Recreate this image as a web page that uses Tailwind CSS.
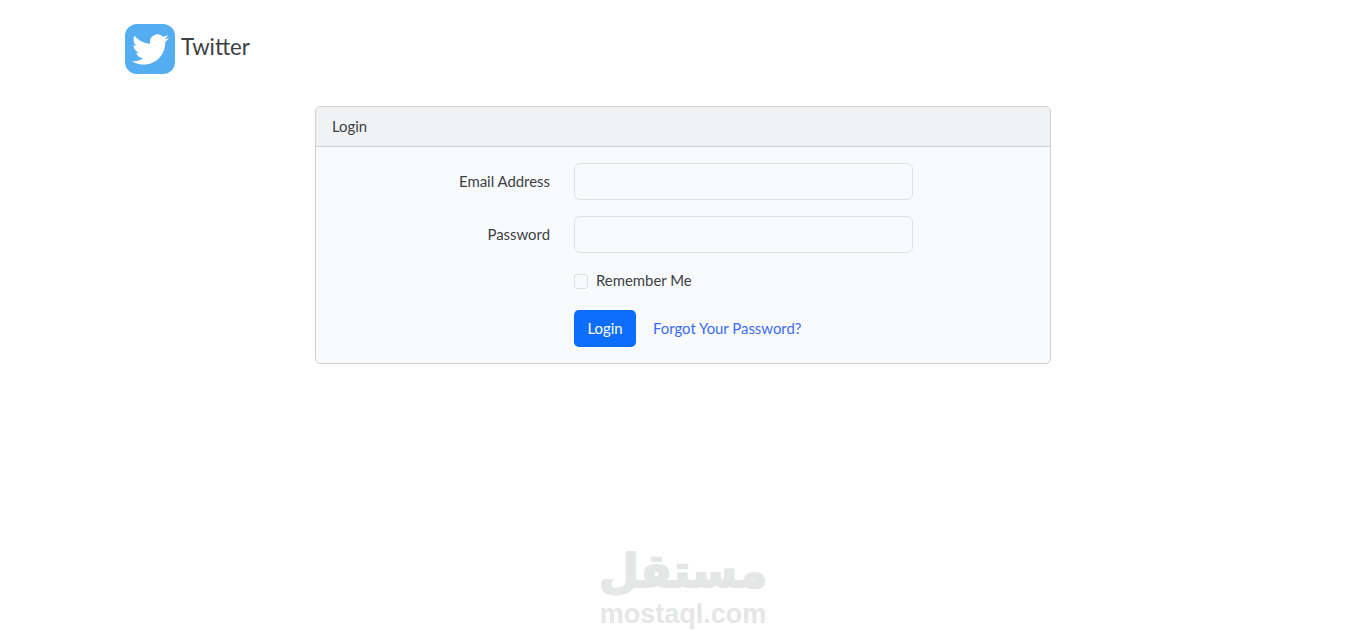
<!DOCTYPE html>
<html lang="en">

<head>
  <meta charset="UTF-8">
  <meta name="viewport" content="width=device-width, initial-scale=1.0">
  <title>Twitter - Login</title>
  <script src="https://cdn.jsdelivr.net/npm/@tailwindcss/browser@4"></script>
</head>

<body class="bg-white h-[641px] overflow-hidden flex flex-col font-['Lato','Open_Sans',sans-serif] text-[14.9px] text-[#3b4045]">
  <!-- Navbar -->
  <nav class="w-[1140px] mx-auto px-3 pt-6 flex items-center gap-[6px]">
    <span class="w-[50px] h-[50px] rounded-[12px] bg-[#53adf0] flex items-center justify-center">
      <svg class="w-[37px] h-[37px] mt-[1px]" viewBox="0 0 24 24" fill="#ffffff">
        <path d="M23.953 4.57a10 10 0 01-2.825.775 4.958 4.958 0 002.163-2.723c-.951.555-2.005.959-3.127 1.184a4.92 4.92 0 00-8.384 4.482C7.69 8.095 4.067 6.13 1.64 3.162a4.822 4.822 0 00-.666 2.475c0 1.71.87 3.213 2.188 4.096a4.904 4.904 0 01-2.228-.616v.06a4.923 4.923 0 003.946 4.827 4.996 4.996 0 01-2.212.085 4.936 4.936 0 004.604 3.417 9.867 9.867 0 01-6.102 2.105c-.39 0-.779-.023-1.17-.067a13.995 13.995 0 007.557 2.209c9.053 0 13.998-7.496 13.998-13.985 0-.21 0-.42-.015-.63A9.935 9.935 0 0024 4.59z" />
      </svg>
    </span>
    <span class="text-[22.2px] leading-none mb-1">Twitter</span>
  </nav>

  <!-- Login card -->
  <main class="w-[736px] ml-[315px] mt-8 border border-[#cfd0d2] rounded-[5px] bg-[#f9fafc] overflow-hidden">
    <div class="h-[40px] px-4 pb-px flex items-center bg-[#f1f2f4] border-b border-[#cfd0d2]">Login</div>
    <form class="px-4 pt-4 pb-4 grid grid-cols-[218px_339px] gap-x-6">
      <label for="email" class="h-[37px] pb-px flex items-center justify-end">Email Address</label>
      <input id="email" type="email" class="h-[37px] bg-[#f9fafc] border border-[#dfe2e6] rounded-[6px]">

      <label for="password" class="h-[37px] pb-px mt-4 flex items-center justify-end">Password</label>
      <input id="password" type="password" class="h-[37px] mt-4 bg-[#f9fafc] border border-[#dfe2e6] rounded-[6px]">

      <label class="col-start-2 mt-5 h-[16px] flex items-center gap-2">
        <span class="w-[14px] h-[15px] border border-[#dcdfe3] rounded-[3px] bg-[#f9fafc]"></span>
        <span class="mb-[2px]">Remember Me</span>
      </label>

      <div class="col-start-2 mt-[21px] flex items-center gap-[17px]">
        <button type="button" class="w-[62px] h-[37px] pb-px bg-[#0d6efd] text-white rounded-[5px]">Login</button>
        <a href="#" class="text-[#3a6bf5] pb-px">Forgot Your Password?</a>
      </div>
    </form>
  </main>

  <!-- Watermark -->
  <div class="mt-auto pb-[15px] flex flex-col items-center text-[#e5e6e6] font-bold">
    <span class="font-['DejaVu_Sans',sans-serif] text-[46px] leading-[62px] [-webkit-text-stroke:2px_#e5e6e6]" dir="rtl" lang="ar">مستقل</span>
    <span class="font-['Liberation_Sans',sans-serif] text-[27px] leading-[24px]">mostaql.com</span>
  </div>
</body>

</html>
